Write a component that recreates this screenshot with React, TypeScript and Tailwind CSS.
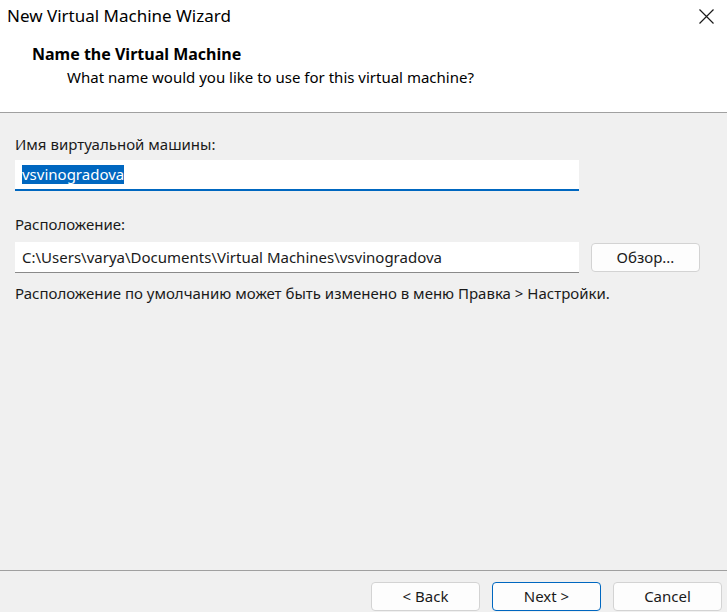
const font = { fontFamily: '"Segoe UI", "Noto Sans", "Open Sans", sans-serif' };

function WinButton({ label, primary }: { label: string; primary?: boolean }) {
  return (
    <button
      className={
        'w-[109px] h-[29px] rounded-[4px] bg-[#fdfdfd] text-[15px] text-[#1a1a1a] leading-none ' +
        (primary ? 'border border-[#0067c0]' : 'border border-[#d3d3d3]')
      }
    >
      {label}
    </button>
  );
}

export default function App() {
  return (
    <div
      className="w-[727px] h-[612px] bg-[#f0f0f0] flex flex-col overflow-hidden text-[#1a1a1a]"
      style={font}
    >
      {/* Header */}
      <div className="h-[113px] bg-white border-b border-[#a0a0a0] flex flex-col shrink-0">
        <div className="h-[32px] flex items-center justify-between pl-[7px] pr-[13px]">
          <span className="text-[17px] text-black">New Virtual Machine Wizard</span>
          <svg width="15" height="15" viewBox="0 0 15 15" className="mr-[0px]">
            <path d="M0.5 0.5 L14.5 14.5 M14.5 0.5 L0.5 14.5" stroke="#1a1a1a" strokeWidth="1.2" fill="none" />
          </svg>
        </div>
        <div className="pl-[32px] mt-[12px] text-[16px] font-bold leading-[20px] text-black">
          Name the Virtual Machine
        </div>
        <div className="pl-[67px] mt-[3px] text-[15px] leading-[20px] text-black">
          What name would you like to use for this virtual machine?
        </div>
      </div>

      {/* Body */}
      <div className="flex-1 px-[15px] pt-[21px]">
        <div className="text-[15px] leading-[20px]">Имя виртуальной машины:</div>
        <div className="mt-[6px] w-[564px] h-[31px] bg-white border-b-2 border-[#0067c0] flex items-center pl-[7px]">
          <span className="bg-[#0067c0] text-white text-[15px] leading-[19px]">vsvinogradova</span>
        </div>

        <div className="mt-[23px] text-[15px] leading-[20px]">Расположение:</div>
        <div className="mt-[8px] flex items-start gap-[12px]">
          <div className="w-[564px] h-[31px] bg-white border-b border-[#8a8a8a] flex items-center pl-[7px] text-[15px]">
            C:\Users\varya\Documents\Virtual Machines\vsvinogradova
          </div>
          <div className="mt-[1px]">
            <WinButton label="Обзор..." />
          </div>
        </div>

        <div className="mt-[10px] text-[15px] leading-[20px]">
          Расположение по умолчанию может быть изменено в меню Правка &gt; Настройки.
        </div>
      </div>

      {/* Footer */}
      <div className="h-[42px] border-t border-[#a0a0a0] flex justify-end items-start gap-[12px] pr-[5px] pt-[11px] shrink-0">
        <WinButton label="< Back" />
        <WinButton label="Next >" primary />
        <WinButton label="Cancel" />
      </div>
    </div>
  );
}
